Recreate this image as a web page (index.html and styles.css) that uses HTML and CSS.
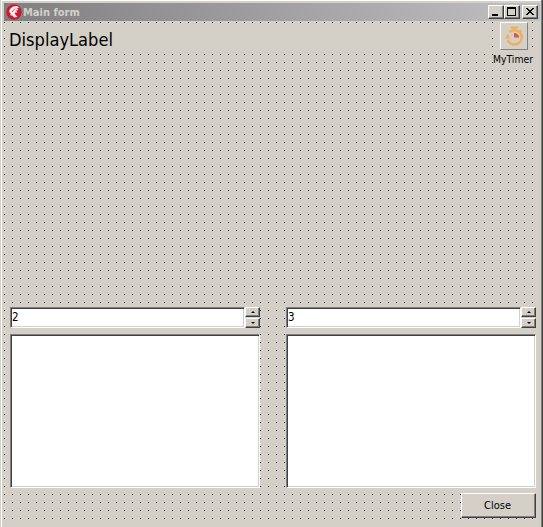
FILE: index.html
```
<!DOCTYPE html>
<html lang="en">
<head>
<meta charset="utf-8">
<title>Main form</title>
<link rel="stylesheet" href="styles.css">
</head>
<body>
<main class="window">
  <header class="titlebar">
    <svg class="app-icon" width="16" height="16" viewBox="0 0 16 16"><circle cx="8" cy="8" r="7.7" fill="#cf1830"/><path d="M3 8 4 5 7 2.500 11 2 13 3.500 11 4.500 12.500 6 10 6.500 11.500 8.500 9 8.500 9 10 11.500 13 8 13.500 6.500 11.500 4.500 11.500 4.500 9Z" fill="#fbeaea"/><path d="M6 8 9 4.500" stroke="#cf1830" stroke-width=".7"/></svg>
    <h1 class="title">Main form</h1>
    <div class="controls">
      <button class="control" aria-label="Minimize"><svg width="14" height="12" shape-rendering="crispEdges"><path d="M3 8h6v2H3z"/></svg></button>
      <button class="control" aria-label="Maximize"><svg width="14" height="12" shape-rendering="crispEdges"><path fill-rule="evenodd" d="M2 1h9v9H2zM3 3v6h7V3z"/></svg></button>
      <button class="control close-control" aria-label="Close window"><svg width="14" height="12" shape-rendering="crispEdges"><path d="M3 2h2v1h1v1h2V3h1V2h2v1h-1v1H9v1H8v1h1v1h1v1h1v1H9V8H8V7H6v1H5v1H3V8h1V7h1V6h1V5H5V4H4V3H3z"/></svg></button>
    </div>
  </header>
  <section class="form">
    <div class="top">
      <div class="display-label"><svg width="120" height="24"><text x="0" y="18" textLength="104" lengthAdjust="spacingAndGlyphs">DisplayLabel</text></svg></div>
      <div class="timer">
        <div class="timer-icon"><svg width="26" height="26" viewBox="0 0 26 26"><path d="M8.500 9.200A7.200 7.200 0 1 1 6.800 17M13.400 4v4M18.300 7.300l2 1.800" fill="none" stroke="#edb15e" stroke-width="2.500"/><path d="M9.500 3.500h7.500v2H9.500zM4 15.500 6.800 10.500 9.500 15.500Z" fill="#edb15e"/><path d="M13 10v4.600h5.300a5 5 0 0 0-5.300-4.600" fill="#df5646"/></svg></div>
        <div class="timer-name"><svg width="44" height="14"><text x="0" y="11" textLength="40" lengthAdjust="spacingAndGlyphs">MyTimer</text></svg></div>
      </div>
    </div>
    <div class="columns">
      <div class="column">
        <div class="spin"><div class="edit">2</div><div class="arrows"><span class="arrow"><i class="up"></i></span><span class="arrow"><i class="down"></i></span></div></div>
        <div class="memo"></div>
      </div>
      <div class="column">
        <div class="spin"><div class="edit">3</div><div class="arrows"><span class="arrow"><i class="up"></i></span><span class="arrow"><i class="down"></i></span></div></div>
        <div class="memo"></div>
      </div>
    </div>
    <div class="footer"><button class="close">Close</button></div>
  </section>
</main>
</body>
</html>
```
FILE: styles.css
```
* { box-sizing: border-box; }
body { margin: 0; background: #d4d0c8; font: 11px "DejaVu Sans Condensed", "DejaVu Sans", sans-serif; color: #000; }
.window { width: 543px; height: 527px; padding: 2px 3px 0 4px; background: #d4d0c8; box-shadow: inset 1px 0 #d4d0c8, inset 2px 0 #fff, inset -1px 0 #404040, inset -2px 0 #808080, inset 0 1px #fff; overflow: hidden; }
.titlebar { display: flex; align-items: center; height: 18px; margin-top: 1px; padding: 0 2px; background: linear-gradient(90deg, #808080, #c0c0c0); }
.title { flex: 1; margin: 0 0 0 1px; color: #d4d0c8; font: bold 11px "DejaVu Sans Condensed", "DejaVu Sans", sans-serif; }
.controls { display: flex; }
.control { display: block; width: 16px; height: 14px; padding: 0; border: 1px solid; border-color: #fff #404040 #404040 #fff; background: #d4d0c8; box-shadow: inset -1px -1px #808080; }
.control svg { display: block; }
.close-control { margin-left: 2px; }
.form { height: 500px; background: conic-gradient(from 270deg at 1px 1px, #1a0a40 25%, transparent 0) 0 1px / 8px 8px; }
.top { display: flex; justify-content: space-between; height: 286px; }
.display-label { width: 480px; height: 24px; margin: 7px 0 0 4px; padding-left: 1px; background: #d4d0c8; font-family: "DejaVu Sans", sans-serif; font-size: 17px; }
.display-label svg, .timer-name svg { display: block; }
.timer { width: 48px; height: 46px; }
.timer-icon { width: 28px; height: 28px; margin: 1px 0 0 8px; border: 1px solid; border-color: #fff #808080 #808080 #fff; background: #d4d0c8; }
.timer-icon svg { display: block; }
.timer-name { width: 44px; height: 14px; margin: 2px 0 0 1px; background: #d4d0c8; font-size: 11px; }
.columns { display: flex; gap: 26px; padding-left: 6px; }
.column { width: 250px; background: #d4d0c8; }
.spin { display: flex; height: 21px; margin-bottom: 6px; }
.edit, .memo { background: #fff; border: 1px solid; border-color: #808080 #fff #fff #808080; box-shadow: inset 1px 1px #404040, inset -1px -1px #d4d0c8; }
.edit { width: 235px; padding: 2px 1px; line-height: 15px; font-size: 11.5px; }
.arrows { display: flex; flex-direction: column; justify-content: space-between; width: 15px; }
.arrow { display: flex; align-items: center; justify-content: center; width: 15px; height: 10px; border: 1px solid; border-color: #fff #404040 #404040 #fff; box-shadow: inset -1px -1px #808080; }
.up, .down { border: 2px solid transparent; }
.up { border-top: 0; border-bottom-color: #000; }
.down { border-bottom: 0; border-top-color: #000; }
.memo { height: 154px; }
.footer { display: flex; justify-content: flex-end; padding: 5px 4px 0 0; }
.close { width: 75px; height: 25px; padding: 0 2px 1px 0; border: 1px solid; border-color: #fff #404040 #404040 #fff; background: #d4d0c8; box-shadow: inset -1px -1px #808080; font: 11px "DejaVu Sans Condensed", sans-serif; }
```
